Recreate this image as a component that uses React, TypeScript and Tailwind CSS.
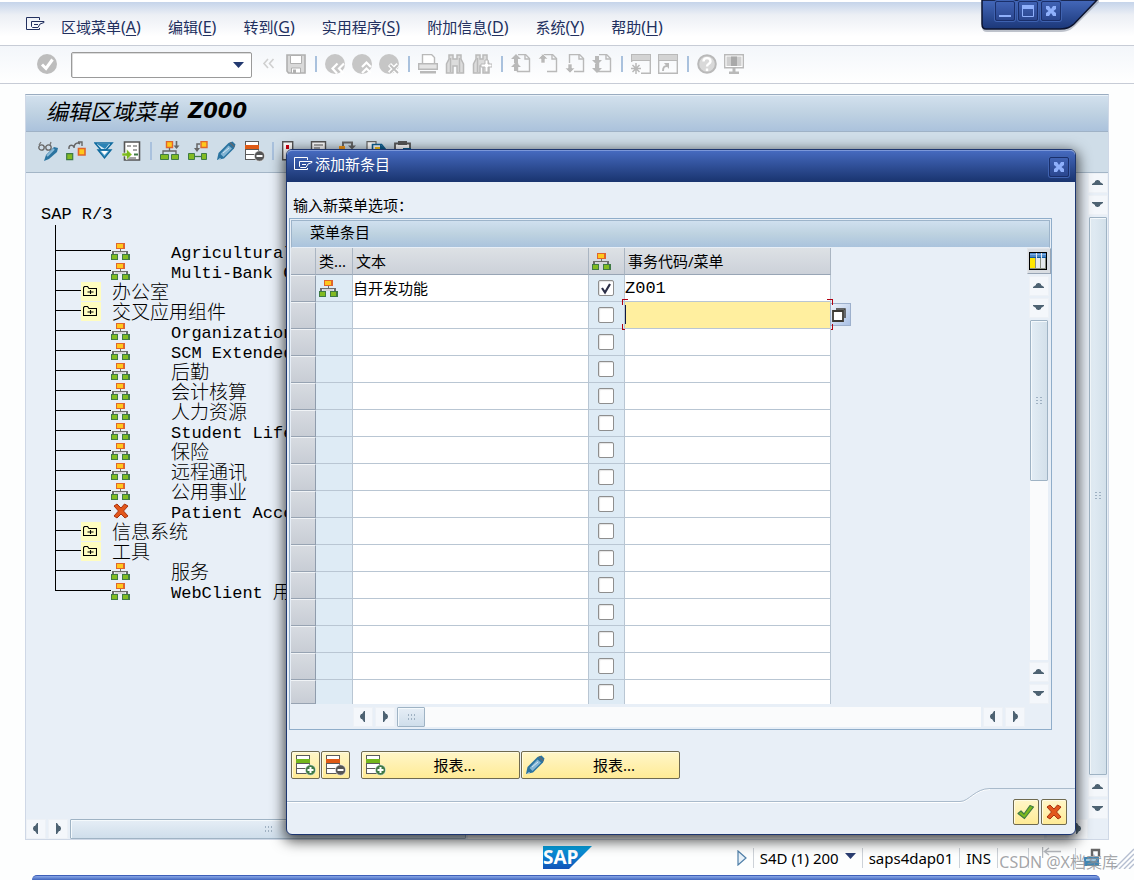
import React from 'react';

const UI = 'font-["Noto_Sans","Noto_Sans_CJK_SC",sans-serif]';
const MONO = 'font-["Liberation_Mono","Noto_Sans_CJK_SC",monospace]';

type IconProps = { children: React.ReactNode; className?: string; size?: string };

function Icon({ children, className = 'w-5 h-5', size = '0 0 20 20' }: IconProps) {
  return (
    <svg viewBox={size} className={`block shrink-0 ${className}`} fill="none" aria-hidden="true">
      {children}
    </svg>
  );
}

function OrgIcon() {
  return (
    <Icon size="0 0 19 17" className="h-[17px] w-[19px]">
      <g shapeRendering="crispEdges">
        <rect x="5" y="0" width="9" height="6" fill="#e0652c" />
        <rect x="6" y="1" width="6" height="4" fill="#ffc81c" />
        <path d="M9 6h1v2H9zM2 8h14v1H2zM1 8h2v3H1zM15 8h2v3h-2z" fill="#6d6d6d" />
        <rect x="4" y="9" width="10" height="2" fill="#d5d5da" />
        <rect x="0" y="11" width="7" height="6" fill="#3f7a45" />
        <rect x="1" y="12" width="5" height="4" fill="#82bb22" />
        <rect x="11" y="11" width="8" height="6" fill="#3f7a45" />
        <rect x="12" y="12" width="5" height="4" fill="#82bb22" />
      </g>
    </Icon>
  );
}

function FolderIcon() {
  return (
    <span className="flex h-[19px] w-5 items-center justify-center bg-[#fffdc0]">
      <Icon size="0 0 14 10" className="mr-0.5 h-2.5 w-3.5">
        <path d="M.5 9.500v-8l1-1h3l1.500 2h7.500v7zM4.500 6h6M7.500 4v4" stroke="#000" strokeWidth="1.100" />
      </Icon>
    </span>
  );
}

function CrossIcon() {
  return (
    <Icon size="0 0 16 16" className="h-4 w-4">
      <path d="M1 3 4 1l4 4 3.500-4L15 3l-4.500 5L15 13l-3 2-4-4-4 4-3-2 4.500-5z" fill="#e2571c" stroke="#a8320f" strokeWidth="1" />
    </Icon>
  );
}

function TickIcon() {
  return (
    <Icon size="0 0 18 16" className="h-4 w-[18px]">
      <path d="M1 9.500 4 7l3 3 6-8.500L16.500 3 7.500 14.500z" fill="#7cba1d" stroke="#3f7a45" strokeWidth="1.200" strokeLinejoin="round" />
    </Icon>
  );
}

function PencilIcon() {
  return (
    <Icon>
      <path d="M1 19l1.500-7 10-10 4-1.500 3 3L18 7.500l-10 10z" fill="#2b74a0" />
      <path d="M4.500 13l8-8.500 3.500 3-8.500 8.500z" fill="#84b5d4" />
      <path d="M7 12l6-5M2.500 18.500l2-1" stroke="#d5e7f2" strokeWidth="1" />
      <path d="M14 1.500l4.500 4.500" stroke="#5f6a72" strokeWidth="1.500" />
    </Icon>
  );
}

function RowsIcon({ kind }: { kind: 'add' | 'remove' }) {
  const band = kind === 'add' ? '#73b61c' : '#df5a15';
  const badge = kind === 'add' ? '#3f7a45' : '#555';
  return (
    <Icon size="0 0 21 21" className="h-[21px] w-[21px]">
      <g shapeRendering="crispEdges">
        <path d="M1 0h14v19H1z" fill="#5a5a5a" />
        <path d="M2 1h12v3H2zM2 9h12v4H2zM2 14h12v4H2z" fill="#fff" />
        <path d="M1 4h14v4H1z" fill={band} />
      </g>
      <circle cx="15.500" cy="15" r="5.200" fill={badge} stroke="#fff" strokeWidth=".6" />
      <path d="M12.500 15h6" stroke="#fff" strokeWidth="2" />
      {kind === 'add' && <path d="M15.500 12v6" stroke="#fff" strokeWidth="2" />}
    </Icon>
  );
}

function HandIcon({ tone }: { tone: string }) {
  return (
    <Icon size="0 0 19 14" className="h-3.5 w-[19px]">
      <path
        d="M13.500 3V.5H.5v12h13V11M5.500 4.500h12.500v1l-4 1.500-2 3.500H6.500l-1-1v-5zM8 7.500h4"
        stroke={tone}
        strokeWidth="1"
      />
    </Icon>
  );
}

const G = '#b9b9b9';

function RoundIcon({ children }: { children: React.ReactNode }) {
  return (
    <Icon>
      <circle cx="10" cy="10" r="10" fill="#c6c6c6" />
      {children}
    </Icon>
  );
}

function PageIcon({ children, x = 0 }: { children: React.ReactNode; x?: number }) {
  return (
    <Icon>
      <path d={x ? 'M4.500 9V.5h10l4 4v13H9' : 'M7 .5h7.500l4 4v13H6.500V9'} stroke={G} strokeWidth="1.400" fill="none" />
      <path d="M14 1v4h5" stroke={G} strokeWidth="1.400" />
      {children}
    </Icon>
  );
}

const UP = (x: number, y: number) => `M${x} ${y}l5 5h-3v4h-4v-4h-3z`;
const DOWN = (x: number, y: number) => `M${x} ${y}l5-5h-3v-4h-4v4h-3z`;

const systemTools: ([string, React.ReactNode] | null)[] = [
  ['保存', (
    <Icon>
      <path d="M1 1h18v18H2.500L1 17z" fill="#d9d9d9" stroke="#b0b0b0" strokeWidth="1.600" />
      <path d="M4.500 1.500h11v8h-11z" fill="#fff" stroke="#b0b0b0" />
      <path d="M5.500 14h9v5h-9z" fill="#fff" stroke="#b0b0b0" />
      <path d="M7 15.500h3V19H7z" fill="#b0b0b0" />
    </Icon>
  )],
  null,
  ['返回', (
    <RoundIcon><path d="M12.500 9.500 7.500 14.500l4.500 5M19 9.500l-5 5 4.500 5" stroke="#fff" strokeWidth="2.200" /></RoundIcon>
  )],
  ['退出', (
    <RoundIcon><path d="M10 13l4.500-4.500L19 13M10 19l4.500-4.500L19 19" stroke="#fff" strokeWidth="2.200" /></RoundIcon>
  )],
  ['取消', (
    <RoundIcon>
      <path d="M10.500 10.500l8.500 8.500M19 10.500 10.500 19" stroke="#fff" strokeWidth="4.400" />
      <path d="M11 11l8 8M19 11l-8 8" stroke="#c0c0c0" strokeWidth="1.800" />
    </RoundIcon>
  )],
  null,
  ['打印', (
    <Icon>
      <path d="M4.500 9V.5h9l3 3V9" stroke={G} strokeWidth="1.400" fill="#fff" />
      <path d="M.7 9.700h18.600v5.600H.7z" fill="#e4e4e4" stroke={G} strokeWidth="1.400" />
      <path d="M2 17h16v2.500H2z" fill={G} />
    </Icon>
  )],
  ['查找', (
    <Icon>
      <path d="M4 1h4v4h4V1h4v4l2.500 5v9H12v-7H8v7H1.500v-9L4 5z" fill="#dcdcdc" stroke={G} strokeWidth="1.500" />
      <path d="M5.500 4v14M14.500 4v14" stroke={G} strokeWidth="1.500" />
    </Icon>
  )],
  ['继续查找', (
    <Icon>
      <path d="M4 1h4v4h3V1h4v4l2 5v9h-6v-7H8v7H1.500v-9L4 5z" fill="#dcdcdc" stroke={G} strokeWidth="1.500" />
      <path d="M5.500 4v14" stroke={G} strokeWidth="1.500" />
      <path d="M13 6h3v4h4v3h-4v5h-3v-5h-4v-3h4z" fill="#fff" stroke={G} />
    </Icon>
  )],
  null,
  ['首页', <PageIcon><path d={UP(5, 0) + UP(5, 8)} fill={G} /></PageIcon>],
  ['上一页', <PageIcon x={1}><path d={UP(5, 0)} fill={G} stroke="#fff" strokeWidth=".6" /></PageIcon>],
  ['下一页', <PageIcon x={1}><path d={DOWN(5, 19)} fill={G} stroke="#fff" strokeWidth=".6" /></PageIcon>],
  ['末页', <PageIcon><path d={DOWN(5, 11) + DOWN(5, 19)} fill={G} /></PageIcon>],
  null,
  ['新建会话', (
    <Icon>
      <path d="M.7 8V.7h18.600v18.600H10" stroke={G} strokeWidth="1.400" />
      <path d="M1 1h18v5H1z" fill="#d3d3d3" />
      <path d="M1 6.500h18" stroke={G} />
      <path d="M5 9v11M0 14.500h10M1.500 11l7 7M8.500 11l-7 7" stroke={G} strokeWidth="1.500" />
    </Icon>
  )],
  ['快捷方式', (
    <Icon>
      <path d="M.7.7h18.600v18.600H.7z" stroke={G} strokeWidth="1.400" />
      <path d="M1 1h18v5H1z" fill="#d3d3d3" />
      <path d="M1 6.500h18" stroke={G} />
      <path d="M5 17c0-4 1-5 4-5" stroke={G} strokeWidth="2" />
      <path d="M6 9h5v6z" fill={G} />
    </Icon>
  )],
  null,
  ['帮助', (
    <Icon>
      <circle cx="10" cy="10" r="8.800" fill="#d9d9d9" stroke={G} strokeWidth="2" />
      <path d="M6.500 7.500c0-4.500 7-4.500 7 0 0 2.500-3.500 2-3.500 5M10 14.500V17" stroke="#fff" strokeWidth="2.400" />
    </Icon>
  )],
  ['布局', (
    <Icon>
      <path d="M.7.7h18.600v13H.7z" fill="#fff" stroke={G} strokeWidth="1.400" />
      <path d="M2.500 2.500h15v9.500h-15z" fill="#cfcfcf" />
      <path d="M7 2.500h6V12H7z" fill="#a9a9a9" />
      <path d="M8.500 14h3v4h-3zM5 17.500h10V20H5z" fill={G} />
    </Icon>
  )],
];

const appTools: ([string, React.ReactNode] | null)[] = [
  ['显示/更改', (
    <Icon>
      <circle cx="3.500" cy="6.500" r="2.700" stroke="#666" strokeWidth="1.300" />
      <circle cx="10.500" cy="6.500" r="2.700" stroke="#666" strokeWidth="1.300" />
      <path d="M1 4l2-3M12 4l1-3M6 6h2" stroke="#777" strokeWidth="1.300" />
      <path d="M6 20l2-6 8-8 4 1-1 4-8 7z" fill="#2b74a0" />
      <path d="M9 15l7-7" stroke="#8dbbd8" strokeWidth="2" />
    </Icon>
  )],
  ['移动', (
    <Icon>
      <path d="M3 8c-.5-4 3-5 5-2M8 7c0-5 4-6 6-4M12 1h4v4" stroke="#666" strokeWidth="1.400" />
      <path d="M.7 12.700h6v6h-6z" fill="#82bb22" stroke="#3f7a45" strokeWidth="1.200" />
      <path d="M12.500 7.500h6.500v6.500h-6.500z" fill="#ffc81c" stroke="#e0652c" strokeWidth="1.600" />
    </Icon>
  )],
  ['展开', (
    <Icon>
      <path d="M1 2h17l-6 7H7z" fill="#d9ebf5" stroke="#0e6a9e" strokeWidth="1.600" />
      <path d="M3 3h12l-4 5z" fill="#2b83b5" />
      <path d="M4 9h13l-6.500 8z" fill="#5ea7cf" stroke="#0e6a9e" strokeWidth="1.400" />
      <path d="M7 10h7l-3.500 4z" fill="#fff" />
    </Icon>
  )],
  ['复制', (
    <Icon>
      <path d="M2.500 1h15v18h-15z" fill="#fff" stroke="#555" strokeWidth="1.600" />
      <path d="M5 5h4M11 5h4M11 9h4M5 17h9" stroke="#888" strokeWidth="1.400" />
      <path d="M12 13.500h4" stroke="#3f7a45" strokeWidth="2" />
      <path d="M0 12h4.500V8l5.500 5.500L4.500 19v-4H0z" fill="#7cba1d" stroke="#fff" strokeWidth=".5" />
    </Icon>
  )],
  null,
  ['插入子节点', (
    <Icon>
      <path d="M6.500.5h6v6h-6z" fill="#ffc81c" stroke="#e0652c" strokeWidth="1.400" />
      <path d="M9.500 7v3M3 13v-3h13v3" stroke="#666" strokeWidth="1.300" />
      <path d="M16.500 0v5" stroke="#666" strokeWidth="1.600" />
      <path d="M13.500 4.500h6l-3 3.500z" fill="#666" />
      <path d="M.5 13.500h8v5h-8zM11.500 13.500h7v5h-7z" fill="#82bb22" stroke="#3f7a45" />
    </Icon>
  )],
  ['插入节点', (
    <Icon>
      <path d="M13 .5h6v6h-6z" fill="#ffc81c" stroke="#e0652c" strokeWidth="1.400" />
      <path d="M12 3H9v5" stroke="#666" strokeWidth="1.500" />
      <path d="M6 7h6l-3 4z" fill="#666" />
      <path d="M6 15.500h8" stroke="#3f7a45" strokeWidth="1.300" />
      <path d="M.5 12.500h6v6h-6zM13.500 12.500h5v6h-5z" fill="#82bb22" stroke="#3f7a45" />
    </Icon>
  )],
  ['更改节点', <PencilIcon />],
  ['删除节点', <RowsIcon kind="remove" />],
  null,
  ['标记', (
    <Icon>
      <path d="M.7.7h10v18h-10z" fill="#fff" stroke="#555" strokeWidth="1.400" />
      <path d="M4 4h3v4H4z" fill="#cf0010" />
    </Icon>
  )],
  ['文档', (
    <Icon>
      <path d="M1.500.7h14v18h-14z" fill="#fff" stroke="#555" strokeWidth="1.400" />
      <path d="M4 4h9M4 7h6" stroke="#aaa" strokeWidth="1.800" />
    </Icon>
  )],
  ['转换', (
    <Icon>
      <path d="M5 6V1.500h9V6" stroke="#666" strokeWidth="2" />
      <path d="M10 4.500h8l-4 4z" fill="#666" />
      <path d="M1 5h6v6H1z" fill="#f79a1b" />
    </Icon>
  )],
  ['传输', (
    <Icon>
      <path d="M1 .7h9v18H1z" fill="#fff" stroke="#666" strokeWidth="1.200" />
      <path d="M6.500 3.500h9l4 5v6h-13z" fill="#fff" stroke="#0e5f92" strokeWidth="1.600" />
      <path d="M9 6h5v4H9z" fill="#ffc81c" />
      <path d="M14 3l6 6h-6z" fill="#0e5f92" />
    </Icon>
  )],
  ['剪贴板', (
    <Icon>
      <path d="M1 2.500h15v16H1z" fill="#fff" stroke="#555" strokeWidth="1.800" />
      <path d="M4 0h9v4H4z" fill="#555" />
      <path d="M9 7h8v6H9z" fill="#0e5f92" />
    </Icon>
  )],
];

const menus: [string, string][] = [
  ['区域菜单', 'A'], ['编辑', 'E'], ['转到', 'G'], ['实用程序', 'S'], ['附加信息', 'D'], ['系统', 'Y'], ['帮助', 'H'],
];

type Node = { kind: 'folder' | 'leaf' | 'cross'; latin?: string; cjk?: string };

const nodes: Node[] = [
  { kind: 'leaf', latin: 'Agricultural' },
  { kind: 'leaf', latin: 'Multi-Bank C' },
  { kind: 'folder', cjk: '办公室' },
  { kind: 'folder', cjk: '交叉应用组件' },
  { kind: 'leaf', latin: 'Organization' },
  { kind: 'leaf', latin: 'SCM Extended' },
  { kind: 'leaf', cjk: '后勤' },
  { kind: 'leaf', cjk: '会计核算' },
  { kind: 'leaf', cjk: '人力资源' },
  { kind: 'leaf', latin: 'Student Life' },
  { kind: 'leaf', cjk: '保险' },
  { kind: 'leaf', cjk: '远程通讯' },
  { kind: 'leaf', cjk: '公用事业' },
  { kind: 'cross', latin: 'Patient Acco' },
  { kind: 'folder', cjk: '信息系统' },
  { kind: 'folder', cjk: '工具' },
  { kind: 'leaf', cjk: '服务' },
  { kind: 'leaf', latin: 'WebClient ', cjk: '用' },
];

const arrows = {
  up: 'M4 12h11v-1l-3-2V8L10 7H9L7 8v1l-3 2z',
  down: 'M4 7h11v1l-3 2v1l-2 1H9l-2-1v-1L4 8z',
  left: 'M12 4v11h-1l-2-3H8l-1-2V9l1-2h1l2-3z',
  right: 'M8 4v11h1l2-3h1l1-2V9l-1-2h-1L9 4z',
};

function ScrollButton({ dir }: { dir: keyof typeof arrows }) {
  return (
    <button type="button" aria-label={dir} className="h-5 w-5 shrink-0 border border-[#edf1f6] bg-[#f4f7fb]">
      <Icon size="0 0 20 20" className="-mt-px -ml-px h-5 w-5">
        <path d={arrows[dir]} fill="#4d6272" />
      </Icon>
    </button>
  );
}

function Grip({ vertical = false }: { vertical?: boolean }) {
  return (
    <Icon size="0 0 8 8" className={vertical ? 'h-2 w-2' : 'h-2 w-2 rotate-90'}>
      <path d="M1 0h2v1H1zM5 0h2v1H5zM1 3h2v1H1zM5 3h2v1H5zM1 6h2v1H1zM5 6h2v1H5z" fill="#9fb1c2" />
    </Icon>
  );
}

const thumb =
  'flex shrink-0 items-center justify-center rounded-[1px] border border-[#9fb3c4] shadow-[inset_1px_1px_0_#f4f9fc]';

function ControlButton({ label, children }: { label: string; children: React.ReactNode }) {
  return (
    <button
      type="button"
      aria-label={label}
      className="flex h-5 w-5 items-center justify-center rounded-[2px] border border-[#1a2f6b] bg-linear-to-b from-[#4062b3] to-[#2a468f] shadow-[0_0_0_1px_#3f62b0]"
    >
      {children}
    </button>
  );
}

function CloseGlyph() {
  return (
    <Icon size="0 0 12 12" className="h-3 w-3">
      <path d="M1 1h3l2 3 2-3h3v3L8.500 6 11 8v3H8L6 8l-2 3H1V8l2.500-2L1 4z" fill="#8fb0fb" />
    </Icon>
  );
}

const yellow =
  'flex items-center rounded-[2px] border border-[#6f6a50] bg-linear-to-b from-[#fff6c8] to-[#ffeb95] shadow-[inset_1px_1px_0_#fffbe2]';

const head = 'border-r border-b border-[#98a5b5] border-r-[#aab5c2] bg-linear-to-b from-[#dde1e5] to-[#ccd1d9] text-left font-normal';

function EntryRow({ index }: { index: number }) {
  const filled = index === 0;
  const active = index === 1;
  const last = index === 15;
  const line = last ? 'border-r border-[#b9c6d3]' : 'border-r border-b border-[#b9c6d3]';
  return (
    <tr className={last ? 'h-6' : 'h-[27px]'}>
      <td className="border border-l-0 border-t-[#f0f3f6] border-r-[#8f9cac] border-b-[#97a3b2] bg-linear-to-b from-[#d7dbe1] to-[#c8cdd5] p-0" />
      <td className={`${line} bg-[#deebf5] py-0 pr-0 pl-[3px]`}>{filled && <OrgIcon />}</td>
      <td className={`${line} bg-white p-0`}>
        <input aria-label="文本" defaultValue={filled ? '自开发功能' : ''} className="block h-[23px] w-full bg-transparent text-[15px] leading-[23px] outline-none" />
      </td>
      <td className={`${line} bg-[#deebf5] p-0`}>
        <span className="relative ml-[9px] block h-4 w-4">
          <input type="checkbox" aria-label="选择" defaultChecked={filled} className="block h-4 w-4 appearance-none rounded-[2px] border border-[#8e8e8e] bg-white shadow-[inset_1px_1px_1px_#e4e4e4]" />
          {filled && (
            <span className="pointer-events-none absolute inset-0">
              <Icon size="0 0 16 16" className="h-4 w-4">
                <path d="M4 8l3 4.500L12 4" stroke="#2c2f48" strokeWidth="2.200" />
              </Icon>
            </span>
          )}
        </span>
      </td>
      <td className={`${line} relative p-0 ${active ? 'bg-[#ffef9f]' : 'bg-white'}`}>
        <input
          aria-label="事务代码/菜单"
          defaultValue={filled ? 'Z001' : ''}
          className={`block h-[23px] w-full bg-transparent text-[17px] leading-[23px] outline-none ${MONO}`}
        />
        {active && (
          <>
            <span className="absolute top-[3px] left-0 h-[19px] w-px bg-[#101840]" />
            <span className="absolute -top-[3px] -left-[3px] h-1.5 w-1.5 border-t border-l border-[#b00010]" />
            <span className="absolute -bottom-0.5 -left-[3px] h-1.5 w-1.5 border-b border-l border-[#b00010]" />
            <button
              type="button"
              aria-label="搜索帮助"
              className="absolute top-px -right-[21px] flex h-[23px] w-[21px] items-center justify-center border border-[#9db0cc] bg-linear-to-br from-[#eef3fb] to-[#a9c0e4] pr-1"
            >
              <Icon size="0 0 14 14" className="h-3.5 w-3.5">
                <path d="M4 1h9v9" stroke="#3c3a34" strokeWidth="1.400" />
                <path d="M1 3h10v10H1z" fill="#fff" stroke="#3c3a34" strokeWidth="1.800" />
              </Icon>
            </button>
            <span className="absolute -top-[3px] -right-[3px] h-1.5 w-1.5 border-t border-r border-[#b00010]" />
            <span className="absolute -right-[3px] -bottom-0.5 h-1.5 w-1.5 border-r border-b border-[#b00010]" />
          </>
        )}
      </td>
    </tr>
  );
}

function EntryDialog() {
  return (
    <section
      role="dialog"
      aria-label="添加新条目"
      className="absolute top-[149px] right-[58px] bottom-[45px] left-[286px] z-10 flex flex-col rounded-[6px] border border-[#1d3670] bg-[#e8eff7] shadow-[0_4px_14px_2px_rgba(0,0,0,0.7)]"
    >
      <header className="flex h-8 shrink-0 items-center gap-0.5 rounded-t-[5px] border-t border-[#7b97d8] bg-linear-to-b from-[#466abf] to-[#19346f] pr-1.5 pl-[7px] text-white">
        <div className="flex flex-1 items-center gap-0.5 pb-1.5">
          <HandIcon tone="#fff" />
          <h2 className="text-[15px] leading-5">添加新条目</h2>
        </div>
        <ControlButton label="关闭"><CloseGlyph /></ControlButton>
      </header>

      <p className="flex h-9 shrink-0 items-end pb-0.5 pl-1.5 text-[15px] leading-[22px]">输入新菜单选项：</p>

      <div className="mr-[23px] ml-0.5 border border-[#8fadca] pt-px pl-px">
        <h3 className="mr-px h-7 border border-[#9db4ca] border-b-[#e8eff7] bg-linear-to-b from-[#d0e0ef] via-[#bdd2e0] to-[#aac3dd] pl-[18px] text-[15px] leading-[22px]">
          菜单条目
        </h3>
        <div className="flex">
          <div className="min-w-0 flex-1">
            <table className="w-[540px] table-fixed border-separate border-spacing-0">
              <colgroup>
                <col className="w-[25px]" />
                <col className="w-[37px]" />
                <col className="w-[236px]" />
                <col className="w-9" />
                <col className="w-[206px]" />
              </colgroup>
              <thead>
                <tr className="h-[27px] text-[15px] leading-5">
                  <th className={`${head} p-0`} />
                  <th className={`${head} py-0 pr-0 pl-[3px] whitespace-nowrap`}>类...</th>
                  <th className={`${head} py-0 pl-[3px]`}>文本</th>
                  <th className={`${head} py-0 pr-0 pl-[3px]`}><OrgIcon /></th>
                  <th className={`${head} py-0 pl-[3px]`}>事务代码/菜单</th>
                </tr>
              </thead>
              <tbody>
                {Array.from({ length: 16 }, (_, i) => <EntryRow key={i} index={i} />)}
              </tbody>
            </table>
          </div>
          <div className="flex w-6 shrink-0 flex-col items-center gap-0.5">
            <button type="button" aria-label="表设置" className="flex h-[26px] w-6 shrink-0 items-center justify-center border border-[#e4e6ea] border-r-[#98a5b5] border-b-[#98a5b5] bg-[#d9dde2] pr-0.5">
              <Icon size="0 0 18 18" className="h-[18px] w-[18px]">
                <g shapeRendering="crispEdges">
                  <path d="M0 0h18v18H0z" fill="#000" />
                  <path d="M1 1h16v4H1z" fill="#4b86c8" />
                  <path d="M1 2h16v1H1z" fill="#7fb0e4" />
                  <path d="M1 5h16v1H1z" fill="#0e5a9e" />
                  <path d="M1 6h6v10H1z" fill="#ffe600" />
                  <path d="M7 1h1v15H7zM12 1h1v15h-1zM8 6h4v10H8zM13 6h4v10h-4z" fill="#e6e9ec" />
                  <path d="M6 6h1v11H6zM11 6h1v11h-1zM16 6h1v11h-1zM1 16h16v1H1z" fill="#8a8e80" />
                </g>
              </Icon>
            </button>
            <ScrollButton dir="up" />
            <ScrollButton dir="down" />
            <div className="flex w-[18px] flex-1 flex-col bg-[#fafbfc]">
              <div className={`${thumb} h-[161px] bg-linear-to-r from-[#e3edf5] to-[#d3e0ea]`}><Grip vertical /></div>
            </div>
            <ScrollButton dir="up" />
            <ScrollButton dir="down" />
          </div>
        </div>
        <div className="flex h-[25px] items-center gap-0.5 pr-[26px] pl-[62px]">
          <ScrollButton dir="left" />
          <ScrollButton dir="right" />
          <div className="flex h-5 flex-1 bg-[#fafbfc]">
            <div className={`${thumb} h-5 w-7 bg-linear-to-b from-[#e6eef6] to-[#cfdeeb]`}><Grip /></div>
          </div>
          <ScrollButton dir="left" />
          <ScrollButton dir="right" />
        </div>
      </div>

      <div className="mt-[21px] flex gap-px pl-1">
        <button type="button" aria-label="插入行" className={`${yellow} h-7 w-[29px] justify-center`}><RowsIcon kind="add" /></button>
        <button type="button" aria-label="删除行" className={`${yellow} h-7 w-[29px] justify-center`}><RowsIcon kind="remove" /></button>
        <button type="button" className={`${yellow} ml-2.5 h-7 w-[159px] pl-[3px] text-[15px]`}>
          <RowsIcon kind="add" />
          <span className="flex-1 pl-1 text-center">报表...</span>
        </button>
        <button type="button" className={`${yellow} h-7 w-[159px] pl-[3px] text-[15px]`}>
          <PencilIcon />
          <span className="flex-1 pl-1 text-center">报表...</span>
        </button>
      </div>

      <div className="flex-1" />

      <footer className="flex h-[46px] shrink-0">
        <div className="mt-[13px] flex-1 border-t border-[#a9bacb] shadow-[inset_0_1px_0_#fff]" />
        <Icon size="0 0 30 15" className="h-[15px] w-[30px]">
          <path d="M0 14.500c9 0 15-13 30-13" stroke="#fff" />
          <path d="M0 13.500c9 0 15-13 30-13" stroke="#a9bacb" />
        </Icon>
        <div className="flex w-[85px] gap-0.5 border-t border-[#a9bacb] pt-2.5 pl-[23px]">
          <button type="button" aria-label="继续" className={`${yellow} h-[26px] w-[26px] justify-center`}><TickIcon /></button>
          <button type="button" aria-label="取消" className={`${yellow} h-[26px] w-[26px] justify-center`}><CrossIcon /></button>
        </div>
      </footer>
    </section>
  );
}

function StatusBar() {
  const sep = <span className="h-5 w-px bg-[#cdd2d8]" />;
  return (
    <footer className="grid h-[35px] shrink-0 grid-cols-[1fr_auto_1fr] items-center">
      <span />
      <svg viewBox="0 0 49 23" className="h-[23px] w-[49px]" role="img" aria-label="SAP">
        <defs>
          <linearGradient id="sap" x1="0" y1="0" x2="0" y2="1">
            <stop offset="0" stopColor="#06a3e0" />
            <stop offset="1" stopColor="#1253b8" />
          </linearGradient>
        </defs>
        <path d="M0 0h49L26 23H0z" fill="url(#sap)" />
        <text x="0" y="18" fill="#fff" fontSize="19" fontWeight="700" fontFamily="Open Sans, sans-serif">SAP</text>
      </svg>
      <div className="flex items-center justify-end gap-1.5 text-[15px] leading-5 whitespace-nowrap">
        <Icon size="0 0 10 16" className="h-4 w-2.5">
          <path d="M1 1l8 7-8 7z" fill="#e6f0f8" stroke="#4f7fa8" strokeWidth="1.200" />
        </Icon>
        {sep}
        <button type="button" className="flex items-center gap-1.5">
          S4D (1) 200
          <Icon size="0 0 11 6" className="mb-1 h-1.5 w-[11px]"><path d="M0 0h11L5.500 6z" fill="#2a3d70" /></Icon>
        </button>
        {sep}
        <span>saps4dap01</span>
        {sep}
        <span>INS</span>
        {sep}
        <span className="w-[18px]" />
        {sep}
        <span className="flex w-[34px] justify-center">
          <Icon size="0 0 20 12" className="mb-2.5 h-3 w-5"><path d="M.5 0v11M2 4.500h17M7 1 2.500 4.500 7 8" stroke="#b5b8bd" strokeWidth="1.500" /></Icon>
        </span>
        {sep}
        <Icon size="0 0 20 20" className="h-5 w-5">
          <path d="M10 8V2h7v6" stroke="#666" strokeWidth="2.400" />
          <path d="M2 9h15v9H2z" fill="#3f86b5" />
          <path d="M4 11h10v2H4z" fill="#9cc6e0" />
        </Icon>
        <Icon size="0 0 26 22" className="h-[22px] w-[26px]">
          <path d="M6 22 26 2M11 22 26 7M16 22l10-10M21 22l5-5" stroke="#b4bed0" strokeWidth="1.400" />
        </Icon>
      </div>
    </footer>
  );
}

export default function App() {
  return (
    <div className={`relative flex min-h-screen flex-col overflow-hidden bg-[#fdfefe] text-black ${UI}`}>
      <nav className="flex h-[46px] shrink-0 items-center border-t-2 border-b border-t-white border-b-[#c7ccd6] bg-linear-to-b from-[#c5d4ea] via-[#eceff5] via-30% to-white to-80% pt-1.5 pl-[26px]">
        <button type="button" aria-label="菜单" className="mr-4 mb-1.5"><HandIcon tone="#22305f" /></button>
        <ul className="flex gap-[27px] text-[15px] leading-6 whitespace-nowrap text-[#22305f]">
          {menus.map(([label, key]) => (
            <li key={key}>
              <button type="button">
                {label}<span className="text-base leading-6">(<u className="underline-offset-2">{key}</u>)</span>
              </button>
            </li>
          ))}
        </ul>
      </nav>

      <div className="absolute top-0 right-[34px] h-9 w-[120px]">
        <svg viewBox="0 0 120 36" className="block h-9 w-[120px]" aria-hidden="true">
          <defs>
            <linearGradient id="tab" x1="0" y1="0" x2="0" y2="1">
              <stop offset="0" stopColor="#4468ba" />
              <stop offset="1" stopColor="#1b3778" />
            </linearGradient>
          </defs>
          <path d="M2 0v27q0 5 5 5h74c8 0 12-4 15-7L119 2V0z" fill="#8c93a3" opacity=".55" />
          <path d="M2 0v24q0 5 4 5h74c8 0 10-2 14-5L117 0z" fill="url(#tab)" stroke="#0c1430" strokeWidth="1.500" />
        </svg>
        <div className="absolute top-px left-[15px] flex gap-[3px]">
          <ControlButton label="最小化">
            <Icon size="0 0 12 12" className="h-3 w-3"><path d="M0 10h12v2H0z" fill="#8fb0fb" /></Icon>
          </ControlButton>
          <ControlButton label="最大化">
            <Icon size="0 0 12 12" className="h-3 w-3">
              <path d="M.5.5h11v11H.5z" stroke="#8fb0fb" /><path d="M0 0h12v4H0z" fill="#8fb0fb" />
            </Icon>
          </ControlButton>
          <ControlButton label="关闭"><CloseGlyph /></ControlButton>
        </div>
      </div>

      <div className="flex h-[38px] shrink-0 items-center gap-[7px] border-b border-[#c7ccd6] bg-linear-to-b from-[#f3f6fa] to-white pb-0.5 pl-[37px]">
        <button type="button" aria-label="回车" className="mr-[7px]">
          <Icon>
            <circle cx="10" cy="10" r="10" fill="#bdbdbd" />
            <path d="M5 10.500l4 4 6.500-9" stroke="#fff" strokeWidth="3" />
          </Icon>
        </button>
        <div className="mt-0.5 flex h-[26px] w-[181px] items-center rounded-[2px] border border-[#9a9a9a] bg-white pr-[7px] shadow-[inset_1px_1px_0_#dcdcdc]">
          <input aria-label="命令" className="h-full min-w-0 flex-1 bg-transparent px-1 outline-none" />
          <button type="button" aria-label="历史">
            <Icon size="0 0 11 6" className="h-1.5 w-[11px]"><path d="M0 0h11L5.500 6z" fill="#22386f" /></Icon>
          </button>
        </div>
        <button type="button" aria-label="收起">
          <Icon><path d="M9 5 5 9.500 9 14M14.500 5l-4 4.500 4 4.500" stroke="#d0d0d0" strokeWidth="1.600" /></Icon>
        </button>
        {systemTools.map((t, i) =>
          t ? (
            <button key={i} type="button" aria-label={t[0]}>{t[1]}</button>
          ) : (
            <span key={i} className="flex w-[5px] justify-center"><span className="h-4 w-0.5 bg-[#a9c1dd]" /></span>
          ),
        )}
      </div>

      <main className="mx-[25px] mt-2.5 flex flex-1 flex-col border border-[#cfd8e6] border-t-[#9aacc0] bg-[#e8eff7]">
        <h1 className="flex h-[37px] shrink-0 items-center border-b border-[#9fb2c6] bg-linear-to-b from-[#d3e1ee] via-[#bfd2e2] to-[#abc2dc] pb-1 pl-5 font-bold whitespace-nowrap italic shadow-[inset_0_1px_0_#e8f1f8]">
          <span className="text-[22px] leading-8 font-normal">编辑区域菜单</span>
          <span className='ml-2.5 font-["DejaVu_Sans",sans-serif] text-[21px] leading-8'>Z000</span>
        </h1>
        <div className="flex h-[41px] shrink-0 items-center gap-2 border-b border-[#a3b5c6] bg-[#cfdde8] pb-0.5 pl-3">
          {appTools.map((t, i) =>
            t ? (
              <button key={i} type="button" aria-label={t[0]} className="flex w-5 justify-center">{t[1]}</button>
            ) : (
              <span key={i} className="h-[18px] w-0.5 bg-[#a9c1dd]" />
            ),
          )}
        </div>
        <div className="flex flex-1">
          <div className={`min-w-0 flex-1 pt-8 pl-3.5 whitespace-nowrap ${MONO}`}>
            <p className="pl-px text-[17px] leading-5">SAP R/3</p>
            <div className="ml-[15px] h-[15px] w-px bg-black" />
            <ul className="ml-[15px]">
              {nodes.map((n, i) => (
                <li key={i} className="flex h-5 items-center">
                  <span className={`w-px shrink-0 self-start bg-black ${i === nodes.length - 1 ? 'h-[11px]' : 'h-5'}`} />
                  <span className={`h-px shrink-0 bg-black ${n.kind === 'folder' ? 'w-[25px]' : 'w-[55px]'}`} />
                  <span className={`flex shrink-0 pt-0.5 ${n.kind === 'folder' ? 'w-[31px]' : n.kind === 'cross' ? 'w-[60px] pl-0.5' : 'w-[60px]'}`}>
                    {n.kind === 'folder' ? <FolderIcon /> : n.kind === 'cross' ? <CrossIcon /> : <OrgIcon />}
                  </span>
                  {n.latin && <span className="pt-2 text-[17px] leading-5">{n.latin}</span>}
                  {n.cjk && <span className={`pt-2 text-[19px] leading-5 font-light ${n.latin ? 'ml-2.5' : ''}`}>{n.cjk}</span>}
                </li>
              ))}
            </ul>
          </div>
          <div className="flex w-5 shrink-0 flex-col items-center gap-0.5">
            <ScrollButton dir="up" />
            <ScrollButton dir="down" />
            <div className={`${thumb} w-[18px] flex-1 bg-linear-to-r from-[#e3edf5] to-[#d3e0ea]`}><Grip vertical /></div>
            <ScrollButton dir="up" />
            <ScrollButton dir="down" />
          </div>
        </div>
        <div className="flex h-5 shrink-0 gap-0.5 pr-5">
          <ScrollButton dir="left" />
          <ScrollButton dir="right" />
          <div className={`${thumb} w-[396px] bg-linear-to-b from-[#e6eef6] to-[#cfdeeb]`}><Grip /></div>
          <div className="flex-1 bg-[#fafbfc]" />
          <ScrollButton dir="left" />
          <ScrollButton dir="right" />
        </div>
      </main>

      <StatusBar />
      <div className="mr-[34px] ml-8 h-[5px] shrink-0 rounded-t-[10px] border-t border-[#3d5fb8] bg-linear-to-b from-[#8aa8e8] to-[#4166bd]" />

      <EntryDialog />

      <p className="pointer-events-none absolute right-4 bottom-1.5 z-20 text-base leading-6 whitespace-nowrap text-[#8d8f93]/80">CSDN @X档案库</p>
    </div>
  );
}
